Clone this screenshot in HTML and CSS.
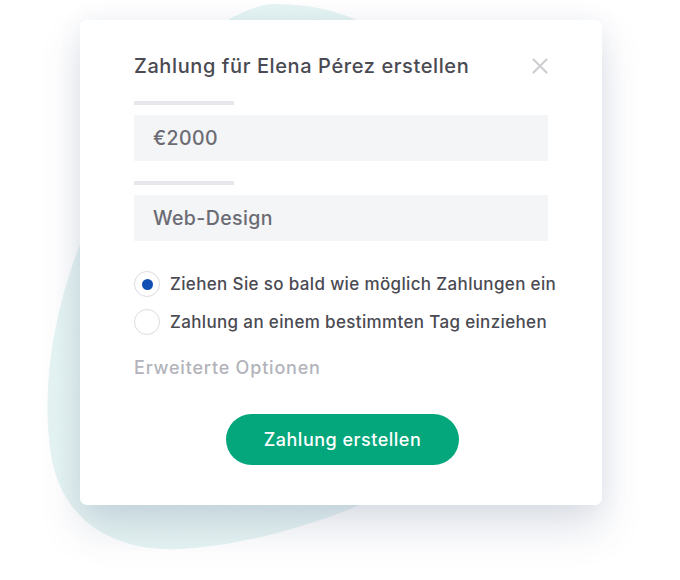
FILE: index.html
```html
<!DOCTYPE html>
<html lang="de">
<head>
<meta charset="utf-8">
<title>Zahlung erstellen</title>
<link rel="stylesheet" href="styles.css">
</head>
<body>
<div class="stage">
  <svg class="blob" width="680" height="580" viewBox="0 0 680 580" aria-hidden="true">
    <defs>
      <filter id="grain" x="0" y="0" width="100%" height="100%">
        <feTurbulence type="fractalNoise" baseFrequency="0.9" numOctaves="2" seed="3" result="n"/>
        <feColorMatrix in="n" type="matrix" values="0 0 0 0 0.82  0 0 0 0 0.91  0 0 0 0 0.93  0 0 0 0.22 0" result="c"/>
        <feComposite in="c" in2="SourceGraphic" operator="in" result="g"/>
        <feMerge><feMergeNode in="SourceGraphic"/><feMergeNode in="g"/></feMerge>
      </filter>
    </defs>
    <path filter="url(#grain)" fill="#e5f4f3" d="M270,4 C320,4 360,15 385,40 L430,470 C360,512 260,545 180,549 C115,552 62,522 51,455 C40,385 55,300 88,225 C125,140 180,20 270,4 Z"/>
  </svg>
  <div class="card">
    <div class="header">
      <h1 class="title">Zahlung für Elena Pérez erstellen</h1>
      <svg class="close" width="16" height="16" viewBox="0 0 16 16" aria-hidden="true">
        <path d="M1.5 1.5 L14.5 14.5 M14.5 1.5 L1.5 14.5" stroke="#cfcfd3" stroke-width="2.2" stroke-linecap="round"/>
      </svg>
    </div>
    <div class="field">
      <div class="label-bar"></div>
      <div class="input">€2000</div>
    </div>
    <div class="field">
      <div class="label-bar"></div>
      <div class="input">Web-Design</div>
    </div>
    <div class="options">
      <div class="option">
        <span class="radio checked"></span>
        <span class="option-text">Ziehen Sie so bald wie möglich Zahlungen ein</span>
      </div>
      <div class="option">
        <span class="radio"></span>
        <span class="option-text">Zahlung an einem bestimmten Tag einziehen</span>
      </div>
    </div>
    <div class="advanced">Erweiterte Optionen</div>
    <div class="actions">
      <button class="submit">Zahlung erstellen</button>
    </div>
  </div>
</div>
</body>
</html>
```

FILE: styles.css
```css
* { box-sizing: border-box; }
html, body {
  margin: 0;
  padding: 0;
  background: #ffffff;
}
body {
  font-family: "Inter", "Lato", sans-serif;
  color: #4a4a52;
}
.stage {
  position: relative;
  width: 680px;
  height: 580px;
  padding: 20px 0 0 80px;
  overflow: hidden;
}
.blob {
  position: absolute;
  left: 0;
  top: 0;
}
.card {
  position: relative;
  width: 522px;
  height: 485px;
  background: #ffffff;
  border-radius: 7px;
  padding: 34px 54px 41px 54px;
  box-shadow: 0 22px 40px rgba(60, 80, 120, 0.17), 0 0 24px rgba(80, 100, 140, 0.07);
  display: flex;
  flex-direction: column;
}
.header {
  display: flex;
  align-items: center;
  justify-content: space-between;
  height: 24px;
}
.title {
  margin: 0;
  font-size: 20px;
  line-height: 24px;
  font-weight: 500;
  color: #4a4a52;
  letter-spacing: 0.6px;
  white-space: nowrap;
}
.close {
  display: block;
}
.header + .field { margin-top: 23px; }
.field {
  display: flex;
  flex-direction: column;
  gap: 10px;
}
.field + .field { margin-top: 20px; }
.label-bar {
  width: 100px;
  height: 4px;
  background: #e7e7eb;
}
.input {
  height: 46px;
  background: #f4f5f7;
  padding: 0 19px;
  display: flex;
  align-items: center;
  font-size: 19.5px;
  font-weight: 500;
  color: #6b6b73;
  letter-spacing: 0.4px;
}
.options {
  margin-top: 30px;
  display: flex;
  flex-direction: column;
  gap: 12px;
}
.option {
  display: flex;
  align-items: center;
  gap: 10px;
  height: 26px;
  white-space: nowrap;
}
.radio {
  width: 26px;
  height: 26px;
  border-radius: 50%;
  border: 1.5px solid #dcdce0;
  background: #fff;
  display: flex;
  align-items: center;
  justify-content: center;
  flex: none;
}
.radio.checked::after {
  content: "";
  width: 11px;
  height: 11px;
  border-radius: 50%;
  background: #0f4fb4;
}
.option-text {
  font-size: 17px;
  font-weight: 500;
  color: #4a4a52;
  letter-spacing: 0.35px;
  white-space: nowrap;
}
.advanced {
  margin-top: 22px;
  font-size: 18px;
  line-height: 22px;
  font-weight: 500;
  color: #b3b3bb;
  letter-spacing: 0.8px;
}
.actions {
  margin-top: 35px;
  display: flex;
  justify-content: center;
  padding-left: 3px;
}
.submit {
  width: 233px;
  height: 51px;
  border: none;
  border-radius: 26px;
  background: #03a77b;
  color: #ffffff;
  font-family: inherit;
  font-size: 18px;
  font-weight: 500;
  letter-spacing: 0.5px;
  cursor: pointer;
}
```
